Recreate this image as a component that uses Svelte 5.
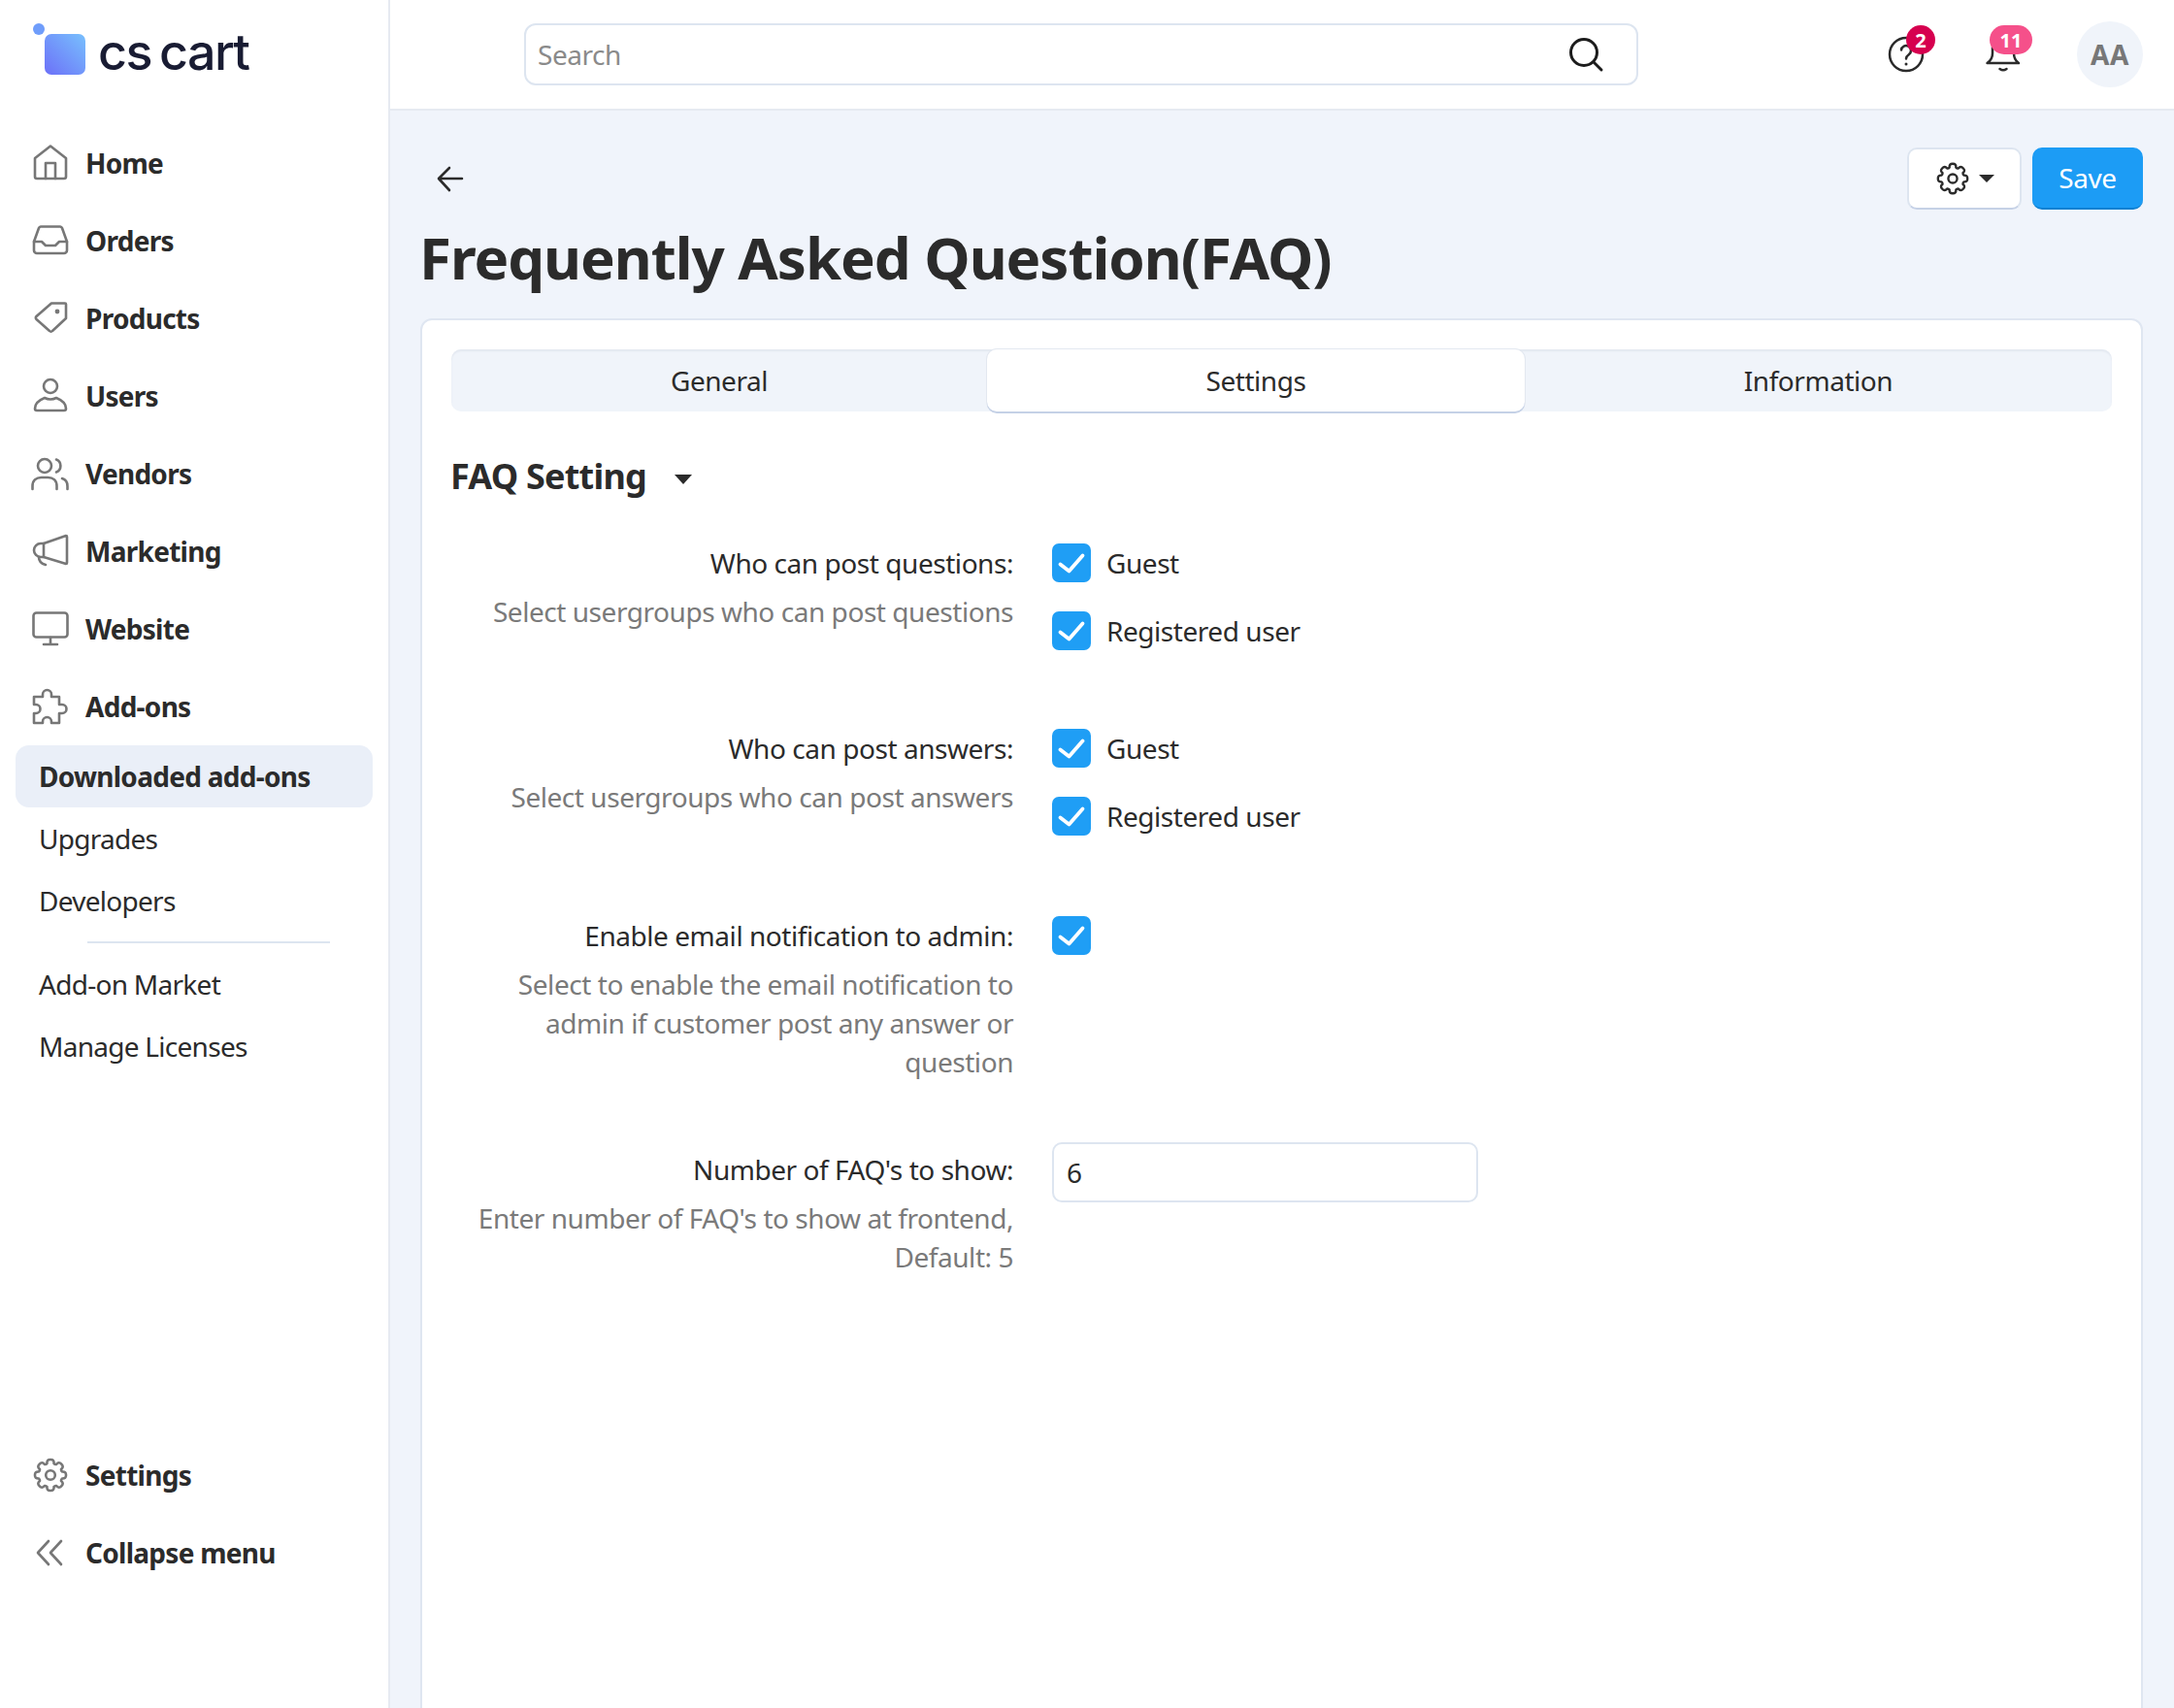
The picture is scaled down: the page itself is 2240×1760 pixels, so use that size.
<script>
	// eight-lobed cog outline, used by the sidebar and the toolbar button
	function gearPath(cx, cy, ro, ri, n = 8) {
		let d = '';
		const step = (Math.PI * 2) / n;
		const pt = (r, a) => `${(cx + r * Math.cos(a)).toFixed(2)} ${(cy + r * Math.sin(a)).toFixed(2)}`;
		for (let i = 0; i < n; i++) {
			const a = i * step - Math.PI / 2;
			const start = pt(ri, a - step * 0.36);
			d += (i === 0 ? 'M' : 'L') + start;
			d += `Q${pt(ro * 1.04, a - step * 0.3)} ${pt(ro, a)}`;
			d += `Q${pt(ro * 1.04, a + step * 0.3)} ${pt(ri, a + step * 0.36)}`;
			d += `Q${pt(ri * 0.93, a + step * 0.5)} ${pt(ri, a + step * 0.64)}`;
		}
		return d + 'Z';
	}
	const gear = gearPath(20, 20, 16, 12.6);

	const navItems = [
		{ label: 'Home', icon: 'home' },
		{ label: 'Orders', icon: 'orders' },
		{ label: 'Products', icon: 'products' },
		{ label: 'Users', icon: 'users' },
		{ label: 'Vendors', icon: 'vendors' },
		{ label: 'Marketing', icon: 'marketing' },
		{ label: 'Website', icon: 'website' },
		{ label: 'Add-ons', icon: 'addons' }
	];

	const settingRows = [
		{
			label: 'Who can post questions:',
			help: 'Select usergroups who can post questions',
			options: ['Guest', 'Registered user']
		},
		{
			label: 'Who can post answers:',
			help: 'Select usergroups who can post answers',
			options: ['Guest', 'Registered user']
		},
		{
			label: 'Enable email notification to admin:',
			help: 'Select to enable the email notification to admin if customer post any answer or question',
			options: ['']
		}
	];
</script>

{#snippet navIcon(name)}
	<svg class="nav-icon" viewBox="0 0 40 40" fill="none" stroke="currentColor" stroke-width="2.6" stroke-linecap="round" stroke-linejoin="round">
		{#if name === 'home'}
			<path d="M20 2.5 L4 15 V34 a2 2 0 0 0 2 2 H34 a2 2 0 0 0 2-2 V15 Z" />
			<path d="M15 36 V20 H25 V36" />
		{:else if name === 'orders'}
			<path d="M3 21 L8 7 a2.5 2.5 0 0 1 2-1.5 H30 a2.5 2.5 0 0 1 2 1.5 L37 21 V30 a3 3 0 0 1-3 3 H6 a3 3 0 0 1-3-3 Z" />
			<path d="M3 21 H11 L15 25 H25 L29 21 H37" />
		{:else if name === 'products'}
			<path d="M21 4.5 H35 a1 1 0 0 1 1 1 V20 L22 33 a2 2 0 0 1-3 0 L5.5 21 a2 2 0 0 1 0-3 Z" />
			<circle cx="27" cy="13" r="2.4" fill="currentColor" stroke="none" />
		{:else if name === 'users'}
			<circle cx="20" cy="10" r="7" />
			<path d="M6 35 a2 2 0 0 1-2-2 c0-6 5-9 10-11 q6 3 12 0 c5 2 10 5 10 11 a2 2 0 0 1-2 2 Z" />
		{:else if name === 'vendors'}
			<circle cx="14" cy="12" r="7" />
			<path d="M26 5.5 a7 7 0 0 1 0 13" />
			<path d="M1.5 36 v-3 c0-6 4-9 9-9 h7 c5 0 9 3 9 9 v3" />
			<path d="M32 25 c3.500 1 5.500 4 5.500 8 v3" />
		{:else if name === 'marketing'}
			<path d="M36 4 L13 12 H10 a7 7 0 0 0 0 14 H13 L36 33 a1 1 0 0 0 1-1 V5 a1 1 0 0 0-1-1Z" />
			<path d="M13 12 V26" />
			<path d="M8 26 c0 4 3 7 7 8" />
		{:else if name === 'website'}
			<rect x="2.500" y="3.500" width="35" height="25" rx="3" />
			<path d="M20 29 V36 M13 36 H27" />
		{:else if name === 'addons'}
			<path d="M3 10 H12 V7.500 a4.500 4.500 0 0 1 9 0 V10 H29 V18 h3 a4.500 4.500 0 0 1 0 9 h-3 V37 H21 v-1.500 a4.500 4.500 0 0 0-9 0 V37 H3 V27 h2 a4.500 4.500 0 0 0 0-9 H3 Z" />
		{:else if name === 'settings'}
			<path d={gear} />
			<circle cx="20" cy="20" r="4.800" />
		{:else if name === 'collapse'}
			<path d="M18 8 L7 20 L18 32 M31 8 L20 20 L31 32" />
		{/if}
	</svg>
{/snippet}

<div class="shell">
	<aside class="sidebar">
		<div class="logo">
			<span class="logo-dot"></span>
			<span class="logo-mark"></span>
			<span class="logo-text">cs cart</span>
		</div>

		<nav>
			{#each navItems as item}
				<div class="nav-row">
					{@render navIcon(item.icon)}
					<span>{item.label}</span>
				</div>
			{/each}

			<div class="subnav">
				<div class="sub-row active">Downloaded add-ons</div>
				<div class="sub-row">Upgrades</div>
				<div class="sub-row">Developers</div>
				<div class="sub-divider"></div>
				<div class="sub-row">Add-on Market</div>
				<div class="sub-row">Manage Licenses</div>
			</div>
		</nav>

		<div class="side-footer">
			<div class="nav-row">
				{@render navIcon('settings')}
				<span>Settings</span>
			</div>
			<div class="nav-row">
				{@render navIcon('collapse')}
				<span>Collapse menu</span>
			</div>
		</div>
	</aside>

	<div class="main">
		<header class="topbar">
			<div class="search">
				<span class="search-hint">Search</span>
				<svg class="search-icon" viewBox="0 0 40 40" fill="none" stroke="#1c1c1c" stroke-width="3" stroke-linecap="round">
					<circle cx="18" cy="18" r="13.500" />
					<path d="M28 28 L36 36" />
				</svg>
			</div>
			<div class="top-actions">
				<div class="top-icon help">
					<svg viewBox="0 0 40 40" fill="none" stroke="#2b2b2b" stroke-width="2.500" stroke-linecap="round">
						<circle cx="20" cy="20" r="17" />
						<path d="M15 15.500 a5 5 0 1 1 8 4.500 c-2 1.500-3 2.500-3 4.500" />
						<circle cx="20" cy="30" r="1.500" fill="#2b2b2b" stroke="none" />
					</svg>
					<span class="badge red">2</span>
				</div>
				<div class="top-icon bell">
					<svg viewBox="0 0 40 40" fill="none" stroke="#2b2b2b" stroke-width="2.500" stroke-linecap="round" stroke-linejoin="round">
						<path d="M3.500 29 c3-2 5.500-5 5.500-10 v-6 a11 11 0 0 1 22 0 v6 c0 5 2 8 5 10 Z" />
						<path d="M16.500 35 q3.500 2.500 7 0" />
					</svg>
					<span class="badge pink">11</span>
				</div>
				<div class="avatar">AA</div>
			</div>
		</header>

		<main class="content">
			<div class="toolbar">
				<svg class="back" viewBox="0 0 30 30" fill="none" stroke="#2b2b2b" stroke-width="2.600" stroke-linecap="round" stroke-linejoin="round">
					<path d="M27 15 H4 M14 4 L3 15 L14 27" />
				</svg>
				<div class="toolbar-actions">
					<button class="btn-gear">
						<svg viewBox="0 0 40 40" fill="none" stroke="#2b2b2b" stroke-width="2.500" stroke-linejoin="round">
							<path d={gear} />
							<circle cx="20" cy="20" r="4.800" />
						</svg>
						<span class="caret"></span>
					</button>
					<button class="btn-save">Save</button>
				</div>
			</div>

			<h1>Frequently Asked Question(FAQ)</h1>

			<section class="card">
				<div class="tabs">
					<div class="tab">General</div>
					<div class="tab selected">Settings</div>
					<div class="tab">Information</div>
				</div>

				<h2>FAQ Setting <span class="caret big"></span></h2>

				<div class="form">
					{#each settingRows as row}
						<div class="form-row">
							<div class="form-label">
								<div class="label-text">{row.label}</div>
								<div class="help-text">{row.help}</div>
							</div>
							<div class="form-control">
								{#each row.options as opt}
									<div class="check-row">
										<span class="checkbox">
											<svg viewBox="0 0 40 40" fill="none" stroke="#fff" stroke-width="3.800" stroke-linecap="round" stroke-linejoin="round">
												<path d="M8.500 21.500 L17.500 28.500 L31.500 12.500" />
											</svg>
										</span>
										{#if opt}<span>{opt}</span>{/if}
									</div>
								{/each}
							</div>
						</div>
					{/each}

					<div class="form-row number">
						<div class="form-label">
							<div class="label-text">Number of FAQ's to show:</div>
							<div class="help-text">Enter number of FAQ's to show at frontend, Default: 5</div>
						</div>
						<div class="form-control">
							<div class="input">6</div>
						</div>
					</div>
				</div>
			</section>
		</main>
	</div>
</div>

<style>
	:global(body) {
		margin: 0;
		background: #f0f4fb;
	}

	.shell {
		display: grid;
		grid-template-columns: 402px 1fr;
		grid-template-rows: 1760px;
		width: 2240px;
		height: 1760px;
		overflow: hidden;
		font-family: 'Noto Sans', sans-serif;
		font-size: 28px;
		letter-spacing: -0.45px;
		color: #2b2b2b;
	}

	/* Sidebar */
	.sidebar {
		display: flex;
		flex-direction: column;
		background: #fff;
		border-right: 2px solid #e6eaf1;
		box-sizing: border-box;
		padding-bottom: 120px;
		letter-spacing: -0.72px;
	}

	.logo {
		position: relative;
		height: 128px;
		display: flex;
		align-items: flex-start;
		padding: 35px 0 0 46px;
		box-sizing: border-box;
	}

	.logo-dot {
		position: absolute;
		left: 34px;
		top: 24px;
		width: 12px;
		height: 12px;
		border-radius: 50%;
		background: #6f9dfb;
	}

	.logo-mark {
		width: 42px;
		height: 42px;
		border-radius: 7px;
		background: linear-gradient(45deg, #6c70f8, #78c0fd);
	}

	.logo-text {
		margin-left: 13px;
		margin-top: -13px;
		font-family: Inter, sans-serif;
		font-size: 52px;
		font-weight: 500;
		letter-spacing: -1.6px;
		word-spacing: -4px;
		color: #191c33;
	}

	.nav-row {
		display: flex;
		align-items: center;
		height: 80px;
		padding-left: 32px;
		gap: 16px;
		font-weight: 700;
	}

	.nav-icon {
		width: 40px;
		height: 40px;
		color: #777;
	}

	.subnav {
		display: flex;
		flex-direction: column;
		padding: 0 16px;
	}

	.sub-row {
		display: flex;
		align-items: center;
		height: 64px;
		padding-left: 24px;
		border-radius: 14px;
	}

	.sub-row.active {
		background: #eaeff8;
		font-weight: 700;
	}

	.sub-divider {
		height: 2px;
		margin: 10px 44px 10px 74px;
		background: #dce5f0;
	}

	.side-footer {
		margin-top: auto;
	}

	/* Top bar */
	.main {
		display: flex;
		flex-direction: column;
		min-width: 0;
		overflow: hidden;
	}

	.topbar {
		display: flex;
		flex-shrink: 0;
		align-items: center;
		justify-content: space-between;
		height: 114px;
		box-sizing: border-box;
		padding: 0 32px 0 138px;
		background: #fff;
		border-bottom: 2px solid #e6eaf1;
	}

	.search {
		display: flex;
		align-items: center;
		justify-content: space-between;
		width: 1148px;
		height: 64px;
		box-sizing: border-box;
		padding: 0 32px 0 12px;
		border: 2px solid #dde5f0;
		border-radius: 12px;
	}

	.search-hint {
		color: #8a8a8a;
	}

	.search-icon {
		width: 40px;
		height: 40px;
	}

	.top-actions {
		display: flex;
		align-items: center;
	}

	.top-icon {
		position: relative;
		width: 40px;
		height: 40px;
	}

	.top-icon svg {
		display: block;
		width: 40px;
		height: 40px;
	}

	.bell {
		margin-left: 60px;
	}

	.badge {
		position: absolute;
		top: -10px;
		display: flex;
		align-items: center;
		justify-content: center;
		height: 30px;
		border-radius: 15px;
		color: #fff;
		font-size: 20px;
		font-weight: 700;
		letter-spacing: 0;
	}

	.badge.red {
		left: 20px;
		width: 30px;
		background: #d6004f;
	}

	.badge.pink {
		left: 6px;
		width: 44px;
		background: #f5508a;
	}

	.avatar {
		display: flex;
		align-items: center;
		justify-content: center;
		width: 68px;
		height: 68px;
		margin-left: 56px;
		border-radius: 50%;
		background: #f0f4fa;
		color: #777;
		font-weight: 700;
		letter-spacing: 0.5px;
	}

	/* Page content */
	.content {
		padding: 38px 32px 0 31px;
		min-width: 0;
	}

	.toolbar {
		display: flex;
		align-items: center;
		justify-content: space-between;
		height: 64px;
	}

	.back {
		width: 30px;
		height: 30px;
		margin-left: 16px;
	}

	.toolbar-actions {
		display: flex;
		gap: 11px;
	}

	.btn-gear,
	.btn-save {
		display: flex;
		align-items: center;
		justify-content: center;
		height: 64px;
		box-sizing: border-box;
		border-radius: 10px;
		font: inherit;
		letter-spacing: inherit;
		cursor: pointer;
	}

	.btn-gear {
		width: 118px;
		gap: 8px;
		background: #fff;
		border: 2px solid #dde5f0;
		border-bottom-color: #c5d1e6;
		color: #2b2b2b;
	}

	.btn-gear svg {
		width: 38px;
		height: 38px;
	}

	.caret {
		display: inline-block;
		width: 0;
		height: 0;
		border-left: 8px solid transparent;
		border-right: 8px solid transparent;
		border-top: 8px solid #2b2b2b;
	}

	.caret.big {
		margin-left: 20px;
		vertical-align: middle;
		border-left-width: 9px;
		border-right-width: 9px;
		border-top-width: 10px;
	}

	.btn-save {
		width: 114px;
		background: #1c9cf5;
		border: none;
		border-bottom: 2px solid #0d80d2;
		color: #fff;
	}

	h1 {
		margin: 9px 0 0 -1px;
		font-size: 60px;
		line-height: 80px;
		font-weight: 700;
		letter-spacing: -1.05px;
	}

	.card {
		margin-top: 23px;
		min-height: 1500px;
		box-sizing: border-box;
		padding: 30px;
		background: #fff;
		border: 2px solid #dfe6f1;
		border-radius: 12px;
	}

	.tabs {
		display: grid;
		grid-template-columns: 552px 554px 1fr;
		height: 64px;
		background: #f0f4fa;
		border-radius: 10px;
		box-shadow: inset 0 2px 2px #e3e8f0;
	}

	.tab {
		display: flex;
		align-items: center;
		justify-content: center;
	}

	.tab.selected {
		background: #fff;
		border-radius: 10px;
		box-shadow: 0 2px 0 #c5d1e6, 0 0 0 1px #e3e8f0;
	}

	h2 {
		margin: 45px 0 0 -1px;
		font-size: 36px;
		line-height: 44px;
		font-weight: 700;
		letter-spacing: -0.78px;
	}

	.form {
		margin-top: 47px;
	}

	.form-row {
		display: grid;
		grid-template-columns: 579px 1fr;
		gap: 40px;
		margin-bottom: 81px;
	}

	.form-row:nth-child(2) {
		margin-bottom: 83px;
	}

	.form-row:nth-child(3) {
		margin-bottom: 63px;
	}

	.form-row.number {
		margin-bottom: 0;
	}

	.form-row.number .form-label {
		padding-top: 8px;
	}

	.form-label {
		text-align: right;
	}

	.label-text {
		line-height: 40px;
	}

	.help-text {
		margin-top: 10px;
		line-height: 40px;
		color: #7a7a7a;
	}

	.form-control {
		display: flex;
		flex-direction: column;
		gap: 30px;
	}

	.check-row {
		display: flex;
		align-items: center;
		gap: 16px;
		height: 40px;
	}

	.checkbox {
		display: block;
		width: 40px;
		height: 40px;
		border-radius: 7px;
		background: #1f9ef5;
	}

	.checkbox svg {
		display: block;
	}

	.input {
		display: flex;
		align-items: center;
		width: 439px;
		height: 62px;
		box-sizing: border-box;
		padding-left: 13px;
		border: 2px solid #dde5f0;
		border-radius: 10px;
	}
</style>
